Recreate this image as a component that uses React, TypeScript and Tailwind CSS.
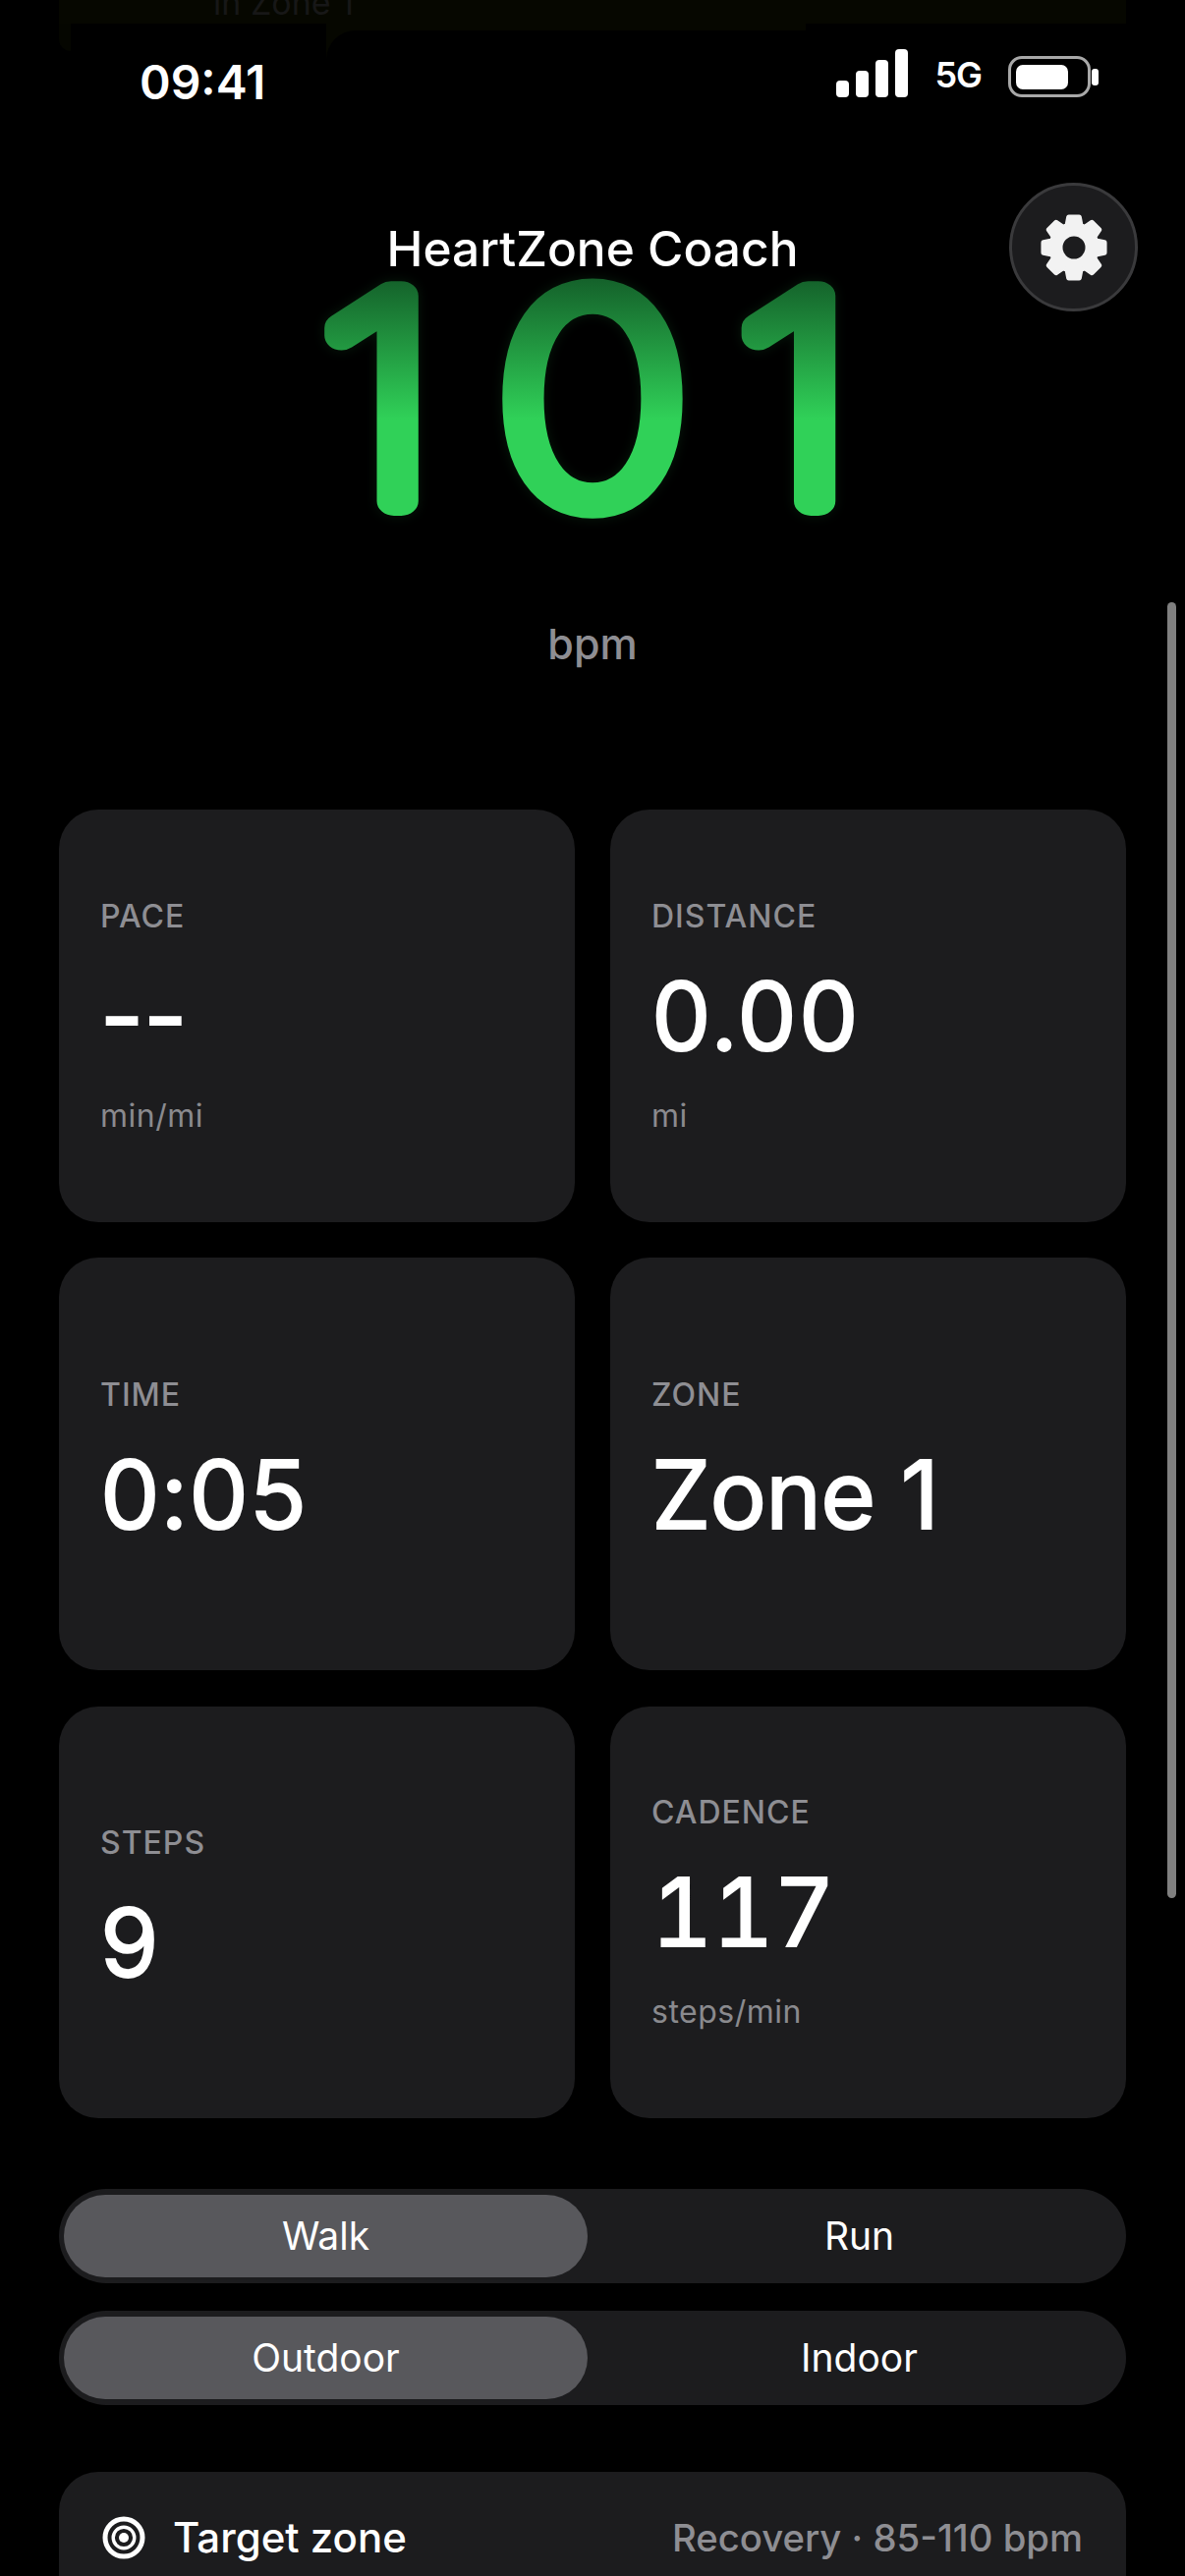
const gearPoints = Array.from({ length: 8 }, (_, i) => {
  const a = (i * Math.PI) / 4 - Math.PI / 2;
  const pt = (r: number, off: number) =>
    `${(r * Math.cos(a + off)).toFixed(2)} ${(r * Math.sin(a + off)).toFixed(2)}`;
  return `L${pt(23.5, -0.3)} L${pt(31.5, -0.17)} L${pt(31.5, 0.17)} L${pt(23.5, 0.3)}`;
})
  .join(" ")
  .replace("L", "M");

function GearIcon() {
  return (
    <svg width="72" height="72" viewBox="-36 -36 72 72" fill="#f2f2f2">
      <path
        d={`${gearPoints} Z M11.5 0 A11.5 11.5 0 1 0 -11.5 0 A11.5 11.5 0 1 0 11.5 0 Z`}
        fillRule="evenodd"
      />
      <path d={`${gearPoints} Z`} fill="none" stroke="#f2f2f2" strokeWidth="5" strokeLinejoin="round" />
    </svg>
  );
}

function TargetIcon() {
  return (
    <svg width="44" height="44" viewBox="0 0 44 44" fill="none" stroke="#fff">
      <circle cx="22" cy="22" r="19" strokeWidth="5" />
      <circle cx="22" cy="22" r="10.8" strokeWidth="3.4" />
      <circle cx="22" cy="22" r="5" fill="#fff" stroke="none" />
    </svg>
  );
}

// big rounded reading, svg text so the stroke can have round joins
function HeartRate() {
  return (
    <svg
      width="1206"
      height="300"
      viewBox="0 0 1206 300"
      className="mt-[-28px] block drop-shadow-[0_0_6px_rgba(48,209,88,0.12)]"
    >
      <defs>
        <linearGradient id="bpmFade" gradientUnits="userSpaceOnUse" x1="0" y1="27" x2="0" y2="172">
          <stop offset="0" stopColor="#14602a" />
          <stop offset="1" stopColor="#30d158" />
        </linearGradient>
      </defs>
      <text
        x="331.9 519.8 697.8"
        y="255"
        transform="scale(1.16 1)"
        textAnchor="middle"
        fontFamily="Inter"
        fontSize="287"
        fontWeight="100"
        fill="url(#bpmFade)"
        stroke="url(#bpmFade)"
        strokeWidth="30"
        strokeLinejoin="round"
      >
        101
      </text>
    </svg>
  );
}

function StatusBar() {
  return (
    <div className="flex h-[132px] items-start justify-between pl-[142px] pr-[88px] text-white">
      <span className="mt-[54px] text-[48px] leading-[60px] font-semibold">09:41</span>
      <div className="mt-[50px] flex items-start">
        <div className="flex h-[49px] items-end gap-[7px]">
          <div className="h-[17px] w-[13px] rounded-[4px] bg-white" />
          <div className="h-[27px] w-[13px] rounded-[4px] bg-white" />
          <div className="h-[38px] w-[13px] rounded-[4px] bg-white" />
          <div className="h-[49px] w-[13px] rounded-[4px] bg-white" />
        </div>
        <span className="mt-[4px] ml-[27px] text-[36px] leading-[44px] font-semibold tracking-[-1px]">5G</span>
        <div className="mt-[7px] ml-[27px] flex items-center gap-[1px]">
          <div className="flex h-[42px] w-[84px] items-center rounded-[14px] border-[3px] border-[#a8a8a8] pl-[5px]">
            <div className="h-[25px] w-[53px] rounded-[7px] bg-white" />
          </div>
          <div className="h-[17px] w-[7px] rounded-[3px] bg-white" />
        </div>
      </div>
    </div>
  );
}

function GhostContent() {
  return (
    <>
      <div className="absolute top-0 left-[60px] h-[24px] w-[1086px] overflow-hidden bg-[#060700]">
        <span className="absolute top-[-17px] left-[157px] text-[34px] leading-[40px] text-[#171717]">in Zone 1</span>
      </div>
      <div className="absolute top-[24px] left-[60px] h-[28px] w-[12px] rounded-bl-[12px] bg-[#050600]" />
      <div className="absolute top-[24px] left-[332px] h-[7px] w-[488px] bg-[#060700]" />
      <div className="absolute top-[31px] left-[332px] h-[30px] w-[36px] bg-[#060700]">
        <div className="h-[30px] w-[36px] rounded-tl-[36px] bg-black" />
      </div>
    </>
  );
}

function Card({ label, value, unit, valueClass }: { label: string; value: string; unit?: string; valueClass?: string }) {
  return (
    <div className="flex flex-col justify-center rounded-[40px] bg-[#1c1c1e] px-[42px]">
      <div className="translate-y-[1px] text-[32px] leading-[40px] font-medium tracking-[1px] text-[#8e8e93]">{label}</div>
      <div
        className={`mt-[22px] h-[120px] text-[96px] leading-[120px] font-normal text-white [-webkit-text-stroke:2px_#fff] ${valueClass ?? ""}`}
      >
        {value}
      </div>
      {unit && <div className="mt-[22px] text-[32px] leading-[40px] tracking-[0.5px] text-[#8a8a8e]">{unit}</div>}
    </div>
  );
}

function Segmented({ options }: { options: string[] }) {
  return (
    <div className="grid h-[96px] grid-cols-2 gap-[10px] rounded-[48px] bg-[#1c1c1e] px-[5px] py-[6px]">
      <div className="flex items-center justify-center rounded-[42px] bg-[#58585c] text-[39px] font-normal text-white">
        {options[0]}
      </div>
      <div className="flex items-center justify-center text-[39px] font-normal text-white">{options[1]}</div>
    </div>
  );
}

export default function App() {
  return (
    <div
      className="relative h-[2622px] w-[1206px] overflow-hidden bg-black"
      style={{ fontFamily: "Inter, 'Liberation Sans', sans-serif" }}
    >
      <GhostContent />
      <div className="relative">
        <StatusBar />
      </div>

      {/* hero */}
      <div className="relative h-[692px]">
        <div className="absolute top-[54px] right-[48px] flex h-[131px] w-[131px] items-center justify-center rounded-full border-[3px] border-[#3a3a3c] bg-[#1c1c1e]">
          <GearIcon />
        </div>
        <h1 className="pt-[91px] text-center text-[49.6px] leading-[60px] font-medium text-white">HeartZone Coach</h1>
        <HeartRate />
        <div className="mt-[75px] text-center text-[43px] leading-[50px] font-medium text-[#8e8e93]">bpm</div>
      </div>

      {/* stats */}
      <div className="grid auto-rows-[419.67px] grid-cols-2 gap-x-[36px] gap-y-[36.67px] px-[60px]">
        <Card label="PACE" value="--" unit="min/mi" />
        <Card label="DISTANCE" value="0.00" unit="mi" valueClass="tracking-[2px]" />
        <Card label="TIME" value="0:05" valueClass="tracking-[1px]" />
        <Card label="ZONE" value="Zone 1" valueClass="tracking-[-0.8px]" />
        <Card label="STEPS" value="9" />
        <Card label="CADENCE" value="117" unit="steps/min" valueClass="tabular-nums" />
      </div>

      {/* mode toggles */}
      <div className="mt-[71.65px] flex flex-col gap-[28px] px-[60px]">
        <Segmented options={["Walk", "Run"]} />
        <Segmented options={["Outdoor", "Indoor"]} />
      </div>

      {/* target */}
      <div className="mx-[60px] mt-[68px] flex h-[200px] items-start justify-between rounded-[40px] bg-[#1c1c1e] px-[44px] pt-[42px]">
        <div className="flex items-center gap-[28px]">
          <TargetIcon />
          <span className="text-[42px] leading-[50px] font-medium text-white">Target zone</span>
        </div>
        <span className="text-[38.3px] leading-[50px] font-medium text-[#8e8e93]">Recovery · 85-110 bpm</span>
      </div>

      {/* scroll indicator */}
      <div className="absolute top-[613px] left-[1188px] h-[1319px] w-[9px] rounded-full bg-[#808080]" />
    </div>
  );
}
